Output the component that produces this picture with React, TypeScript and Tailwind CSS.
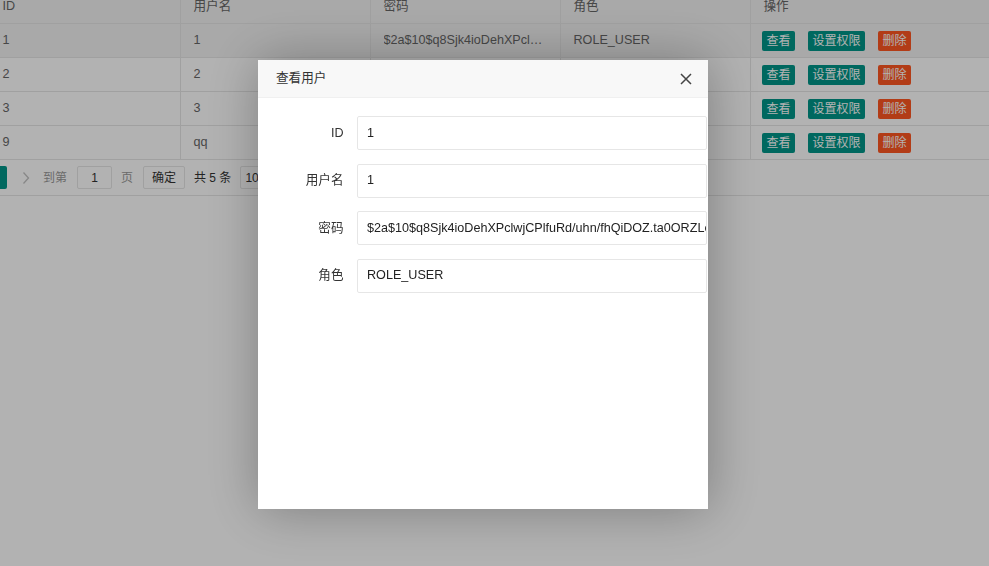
import React from "react";

const font = { fontFamily: '"Liberation Sans", "Noto Sans CJK SC", sans-serif' };

const rows = [
  { id: "1", name: "1", pwd: "$2a$10$q8Sjk4ioDehXPclwjCPlfuRd/uhn/fhQiDOZ.ta0ORZLe", role: "ROLE_USER", hover: true },
  { id: "2", name: "2", pwd: "", role: "", hover: false },
  { id: "3", name: "3", pwd: "", role: "", hover: false },
  { id: "9", name: "qq", pwd: "", role: "", hover: false },
];

function Cell({ children, last, header, hover }: { children?: React.ReactNode; last?: boolean; header?: boolean; hover?: boolean }) {
  return (
    <div
      className={
        "h-[34px] box-border border-b border-[#e6e6e6] flex items-center pl-[12.5px] pr-[13.5px] overflow-hidden whitespace-nowrap text-[12.6px] text-[#666] " +
        (last ? "" : "border-r ") +
        (header || hover ? "bg-[#f2f2f2]" : "bg-white")
      }
    >
      {children}
    </div>
  );
}

function Btn({ children, danger }: { children: React.ReactNode; danger?: boolean }) {
  return (
    <span
      className={
        "inline-flex items-center h-[20px] px-[4.5px] rounded-[2px] text-[12px] text-white leading-none " +
        (danger ? "bg-[#FF5722]" : "bg-[#009688]")
      }
    >
      {children}
    </span>
  );
}

export default function App() {
  return (
    <div className="relative w-[989px] h-[566px] overflow-hidden bg-white" style={font}>
      <div className="-ml-[10px] -mt-[10px]">
        <div className="grid grid-cols-[191px_190px_190px_190px_1fr]">
          <Cell header>ID</Cell>
          <Cell header>用户名</Cell>
          <Cell header>密码</Cell>
          <Cell header>角色</Cell>
          <Cell header last>操作</Cell>
          {rows.map((r) => (
            <React.Fragment key={r.id}>
              <Cell hover={r.hover}>{r.id}</Cell>
              <Cell hover={r.hover}>{r.name}</Cell>
              <Cell hover={r.hover}>
                <span className="truncate block min-w-0 flex-1">{r.pwd}</span>
              </Cell>
              <Cell hover={r.hover}>{r.role}</Cell>
              <Cell hover={r.hover} last>
                <div className="flex items-center gap-[13px] -ml-[1.5px] mt-[1px]">
                  <Btn>查看</Btn>
                  <Btn>设置权限</Btn>
                  <Btn danger>删除</Btn>
                </div>
              </Cell>
            </React.Fragment>
          ))}
        </div>
        <div className="h-[36px] box-border border-b border-[#e6e6e6] flex items-center text-[12px] text-[#666] ml-[10px]">
          <div className="w-[30px] h-[23px] -ml-[23px] bg-[#009688] rounded-[2px] mt-[-1px]" />
          <svg width="8" height="14" viewBox="0 0 8 14" className="ml-[15px]">
            <path d="M1.5 1.5 L6.5 7 L1.5 12.5" fill="none" stroke="#c2c2c2" strokeWidth="1.3" />
          </svg>
          <span className="ml-[13px] text-[#999]">到第</span>
          <span className="ml-[10px] w-[35px] h-[23px] box-border border border-[#e6e6e6] rounded-[2px] flex items-center justify-center text-[#333]">1</span>
          <span className="ml-[9px] text-[#999]">页</span>
          <span className="ml-[10px] w-[42px] h-[23px] box-border border border-[#e6e6e6] rounded-[2px] flex items-center justify-center text-[#333]">确定</span>
          <span className="ml-[9px] text-[#333]">共 5 条</span>
          <span className="ml-[9px] w-[90px] h-[23px] box-border border border-[#e6e6e6] rounded-[2px] flex items-center pl-[4px] text-[#333]">10 条/页</span>
        </div>
      </div>

      <div className="fixed inset-0 bg-black/30" />

      <div className="fixed left-[258px] top-[60px] w-[450px] h-[449px] bg-white shadow-[1px_1px_50px_rgba(0,0,0,0.3)] overflow-hidden">
        <div className="h-[38px] box-border border-b border-[#f0f0f0] bg-[#f8f8f8] flex items-center pl-[18px] pr-[16px] text-[12.6px] text-[#333]">
          <span className="flex-1">查看用户</span>
          <svg width="12" height="12" viewBox="0 0 12 12">
            <path d="M1 1 L11 11 M11 1 L1 11" stroke="#444" strokeWidth="1.5" />
          </svg>
        </div>
        <div className="pt-[18px]">
          {[
            ["ID", "1"],
            ["用户名", "1"],
            ["密码", "$2a$10$q8Sjk4ioDehXPclwjCPlfuRd/uhn/fhQiDOZ.ta0ORZLe"],
            ["角色", "ROLE_USER"],
          ].map(([label, value]) => (
            <div key={label} className="flex items-center mb-[13.5px]">
              <div className="w-[99px] box-border pr-[13.5px] text-right text-[12.6px] text-[#333]">{label}</div>
              <div className="w-[350px] h-[34px] box-border border border-[#e6e6e6] rounded-[2px] flex items-center pl-[9px] text-[12.6px] text-[#222] overflow-hidden whitespace-nowrap">
                {value}
              </div>
            </div>
          ))}
        </div>
      </div>
    </div>
  );
}
